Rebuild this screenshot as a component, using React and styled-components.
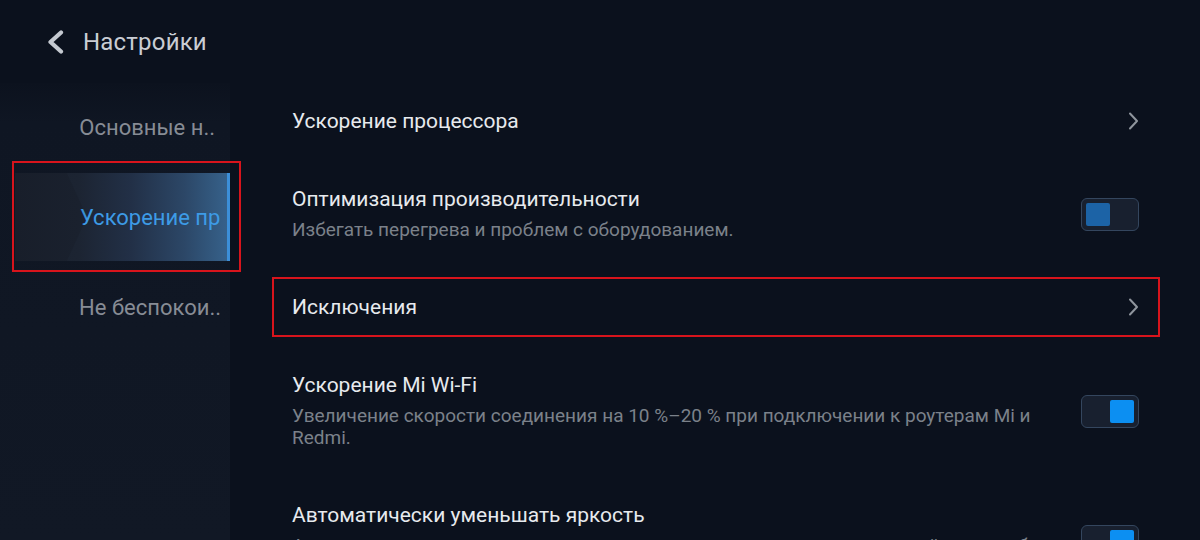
import React, { useState } from "react";
import styled, { createGlobalStyle } from "styled-components";

const GlobalStyle = createGlobalStyle`
  html, body {
    margin: 0;
    padding: 0;
    background: #0b111d;
  }
  body {
    font-family: Roboto, "Noto Sans", "Liberation Sans", sans-serif;
    overflow: hidden;
  }
`;

const menu = [
  { id: "general", label: "Основные н.." },
  { id: "boost", label: "Ускорение пр", active: true },
  { id: "dnd", label: "Не беспокои..", shift: 6 },
];

const settings = [
  { id: "cpu", title: "Ускорение процессора", kind: "link" },
  {
    id: "perf",
    title: "Оптимизация производительности",
    hint: "Избегать перегрева и проблем с оборудованием.",
    kind: "toggle",
    on: false,
  },
  { id: "except", title: "Исключения", kind: "link", marked: true },
  {
    id: "wifi",
    title: "Ускорение Mi Wi-Fi",
    hint: "Увеличение скорости соединения на 10 %–20 % при подключении к роутерам Mi и\nRedmi.",
    kind: "toggle",
    on: true,
  },
  {
    id: "bright",
    title: "Автоматически уменьшать яркость",
    hint: "Автоматически уменьшать яркость экрана при сильном нагреве устройства, чтобы снизить температуру.",
    kind: "toggle",
    on: true,
  },
];

export default function App() {
  return (
    <Page>
      <GlobalStyle />
      <Header>
        <BackIcon viewBox="0 0 20 24">
          <path d="M15 2.5 L4.5 12 L15 21.5" />
        </BackIcon>
        <HeaderTitle>Настройки</HeaderTitle>
      </Header>
      <Body>
        <Sidebar>
          {menu.map((m) => (
            <MenuSlot key={m.id}>
              <MenuItem active={m.active} shift={m.shift || 0}>
                {m.label}
              </MenuItem>
              {m.active && <Marker />}
            </MenuSlot>
          ))}
        </Sidebar>
        <List>
          {settings.map((s) => (
            <SettingRow key={s.id} item={s} />
          ))}
        </List>
      </Body>
    </Page>
  );
}

function SettingRow({ item }) {
  const [on, setOn] = useState(item.on);
  return (
    <Row marked={item.marked}>
      <RowText>
        <Title>{item.title}</Title>
        {item.hint && <Hint>{item.hint}</Hint>}
      </RowText>
      {item.kind === "link" ? (
        <Chevron viewBox="0 0 12 18">
          <path d="M3 1.5 L10 9 L3 16.5" />
        </Chevron>
      ) : (
        <Switch on={on} onClick={() => setOn(!on)}>
          <Knob on={on} />
        </Switch>
      )}
    </Row>
  );
}

// Style Component
const Page = styled.div`
  width: 1200px;
  height: 540px;
  display: flex;
  flex-direction: column;
  background: #0b111d;
  overflow: hidden;
`;

const Header = styled.div`
  height: 83px;
  flex-shrink: 0;
  display: flex;
  align-items: center;
  padding-left: 46px;
  box-sizing: border-box;
`;

const BackIcon = styled.svg`
  width: 20px;
  height: 24px;
  margin-right: 17px;
  path {
    fill: none;
    stroke: #c4c9d0;
    stroke-width: 4.2;
    stroke-linecap: round;
    stroke-linejoin: round;
  }
`;

const HeaderTitle = styled.h1`
  margin: 0;
  font-size: 24px;
  font-weight: 400;
  color: #c9cdd4;
  letter-spacing: 0.2px;
`;

const Body = styled.div`
  flex: 1;
  display: flex;
  min-height: 0;
`;

const Sidebar = styled.div`
  width: 230px;
  flex-shrink: 0;
  background: linear-gradient(180deg, #0c121e 0px, #0f1623 40px, #111825 100%);
  display: flex;
  flex-direction: column;
  gap: 2px;
  padding-left: 15px;
  box-sizing: border-box;
`;

const MenuSlot = styled.div`
  position: relative;
  height: 88px;
`;

const MenuItem = styled.div`
  position: relative;
  height: 100%;
  display: flex;
  align-items: center;
  justify-content: ${(p) => (p.active ? "flex-start" : "flex-end")};
  padding-left: ${(p) => (p.active ? "65px" : "0")};
  padding-right: ${(p) => (p.active ? "0" : `${15 - p.shift}px`)};
  font-size: 22px;
  color: ${(p) => (p.active ? "#3d9be6" : "#878c95")};
  white-space: nowrap;
  overflow: hidden;
  box-sizing: border-box;
  background: ${(p) =>
    p.active
      ? "linear-gradient(90deg, #1a212e 0%, #1c2432 30%, #223047 55%, #2c4767 80%, #36618a 100%)"
      : "none"};
  border-right: ${(p) => (p.active ? "3px solid #3c8fd8" : "none")};

  &::before {
    content: "";
    display: ${(p) => (p.active ? "block" : "none")};
    position: absolute;
    left: 0;
    top: 0;
    bottom: 0;
    width: 72px;
    background: rgba(0, 0, 0, 0.07);
    clip-path: polygon(0 0, 72% 0, 100% 50%, 72% 100%, 0 100%);
  }
`;

const Marker = styled.div`
  position: absolute;
  top: -12px;
  bottom: -11px;
  left: -3px;
  right: -11px;
  border: 2px solid #d8141c;
  pointer-events: none;
`;

const List = styled.div`
  flex: 1;
  display: flex;
  flex-direction: column;
  gap: 18px;
  padding: 8px 40px 0 42px;
`;

const Row = styled.div`
  display: flex;
  align-items: center;
  gap: 22px;
  padding: 16px 19px 16px 18px;
  flex-shrink: 0;
  border: 2px solid ${(p) => (p.marked ? "#d8141c" : "transparent")};
`;

const RowText = styled.div`
  flex: 1;
  min-width: 0;
  display: flex;
  flex-direction: column;
  gap: 8px;
`;

const Title = styled.div`
  font-size: 21px;
  line-height: 24px;
  color: #e7eaee;
`;

const Hint = styled.div`
  font-size: 19px;
  line-height: 22px;
  color: #7b818a;
  white-space: pre-line;
`;

const Chevron = styled.svg`
  width: 12px;
  height: 18px;
  flex-shrink: 0;
  path {
    fill: none;
    stroke: #8f959d;
    stroke-width: 2;
    stroke-linecap: round;
    stroke-linejoin: round;
  }
`;

const Switch = styled.div`
  width: 58px;
  height: 33px;
  flex-shrink: 0;
  box-sizing: border-box;
  border: 1.5px solid #34465e;
  border-radius: 6px;
  background: #18202f;
  padding: 4px;
  display: flex;
  justify-content: ${(p) => (p.on ? "flex-end" : "flex-start")};
  cursor: pointer;
`;

const Knob = styled.div`
  width: 24px;
  height: 100%;
  border-radius: 2px;
  background: ${(p) => (p.on ? "#0c8ff2" : "#1c63a6")};
`;
